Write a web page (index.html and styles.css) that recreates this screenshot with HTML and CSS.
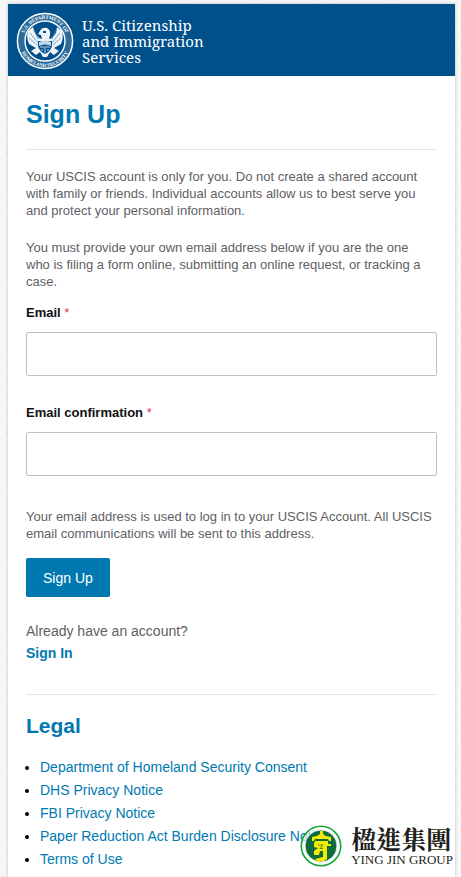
FILE: index.html
```
<!DOCTYPE html>
<html lang="en">

<head>
  <meta charset="UTF-8" />
  <meta name="viewport" content="width=device-width, initial-scale=1.0" />
  <title>Sign Up | USCIS</title>
  <link rel="stylesheet" href="styles.css">
</head>

<body>

  <div class="page">
    <header class="header">
      <svg class="seal" viewBox="0 0 58 58" aria-hidden="true">
        <defs>
          <path id="sealTop" d="M7.6 34 A22 22 0 1 1 50.4 34" />
          <path id="sealBottom" d="M3.5 34 A26 26 0 0 0 54.5 34" />
        </defs>
        <circle cx="29" cy="29" r="27.6" fill="#2b6b9c" stroke="#fff" stroke-width="1.5" />
        <circle cx="29" cy="29" r="20" fill="#00518b" stroke="#fff" stroke-width="1.4" />
        <text class="seal-text"><textPath href="#sealTop" startOffset="50%">U.S. DEPARTMENT OF</textPath></text>
        <text class="seal-text"><textPath href="#sealBottom" startOffset="50%">HOMELAND SECURITY</textPath></text>
        <!-- eagle -->
        <path fill="#eef4f8" d="M12 19 L17 15 L19 21 L23 26 L26 27 L25 23 L22 22 L24 19 Q26 15 31 16 Q35 18 34 23 L33 27 L36 26 L40 21 L41 15 L46 19 Q48 26 45 32 L38 36 L43 39 L38 43 L34 40 L31 45 H27 L24 40 L20 43 L15 39 L20 36 L13 32 Q10 26 12 19Z" />
        <path fill="none" stroke="#4f86ae" stroke-width="0.7" d="M14 21 L23 32 M13 26 L21 33 M44 21 L35 32 M45 26 L37 33 M18 18 L22 27 M40 18 L36 27" />
        <path fill="#00518b" d="M22 29 H36 V34 Q35 39 29 42 Q23 39 22 34Z" />
        <path fill="#c3d7e5" d="M23 30 Q29 27 35 30 V34 Q29 31 23 34Z" />
        <path fill="none" stroke="#d5e4ee" stroke-width="0.9" d="M24 35 H34 M26 37 V39 M29 36 V41 M32 37 V39" />
        <path fill="#00518b" d="M27 19 H30 V21 H27Z" />
      </svg>
      <div class="brand">U.S. Citizenship<br>and Immigration<br>Services</div>
    </header>

    <main class="content">
      <h1>Sign Up</h1>
      <hr>
      <div class="intro">
        <p>Your USCIS account is only for you. Do not create a shared account with family or friends. Individual accounts allow us to best serve you and protect your personal information.</p>
        <p>You must provide your own email address below if you are the one who is filing a form online, submitting an online request, or tracking a case.</p>
      </div>

      <form id="signUpForm">
        <div class="field">
          <label for="email">Email <span class="required">*</span></label>
          <input type="email" id="email" name="email" required>
        </div>
        <div class="field">
          <label for="emailConfirmation">Email confirmation <span class="required">*</span></label>
          <input type="email" id="emailConfirmation" name="emailConfirmation" required>
        </div>
        <p class="hint">Your email address is used to log in to your USCIS Account. All USCIS email communications will be sent to this address.</p>
        <button type="submit" class="btn">Sign Up</button>
      </form>

      <div class="account">
        <p>Already have an account?</p>
        <a href="#">Sign In</a>
      </div>
      <hr>

      <h2>Legal</h2>
      <ul class="legal">
        <li><a href="#">Department of Homeland Security Consent</a></li>
        <li><a href="#">DHS Privacy Notice</a></li>
        <li><a href="#">FBI Privacy Notice</a></li>
        <li><a href="#">Paper Reduction Act Burden Disclosure Notice</a></li>
        <li><a href="#">Terms of Use</a></li>
      </ul>
    </main>
  </div>

  <!-- Watermark -->
  <div class="watermark">
    <svg class="watermark-logo" viewBox="0 0 42 42" aria-hidden="true">
      <circle cx="21" cy="21" r="19.7" fill="#fff" fill-opacity="0.6" stroke="#13a538" stroke-width="1.6" />
      <circle cx="21" cy="21" r="16" fill="#0d6b3c" stroke="#fff" stroke-width="0.8" />
      <path fill="#f6ea00" d="M20 6 H23 V9 L26 11 L31 12 V16 H29 L28 14 H15 L14 16 H12 V12 L17 11 L20 9Z" />
      <path fill="#f6ea00" d="M15 16 H28 V19 H31 V21 H27 V34 L24 36 L17 37 L15 34 L23 32 V26 L20 26 L19 30 L14 30 V26 L18 23 L14 22 V19Z" />
      <path fill="none" stroke="#0d6b3c" stroke-width="0.7" d="M15 15 H28 M18 20 H23 L20 23.5 H23" />
    </svg>
    <div class="watermark-name">
      <span class="name-zh" lang="zh-Hant">楹進集團</span>
      <span class="name-en">YING JIN GROUP</span>
    </div>
  </div>

</body>

</html>
```
FILE: styles.css
```
* {
  margin: 0;
  padding: 0;
  box-sizing: border-box;
}

body {
  min-height: 100vh;
  padding: 4px 6px 0 8px;
  display: flex;
  flex-direction: column;
  font-family: Arial, "Liberation Sans", sans-serif;
  font-size: 13px;
  line-height: 17px;
  color: #5f6064;
  background: repeating-linear-gradient(135deg, #f9f9f9 0, #f9f9f9 2px, #f1f1f1 2px, #f1f1f1 3px);
}

.page {
  flex: 1;
  background-color: #fff;
  box-shadow: 0 0 3px rgba(0, 0, 0, 0.25);
}

.header {
  display: flex;
  align-items: center;
  gap: 8px;
  height: 72px;
  padding: 2px 8px 0;
  background-color: #00518b;
}

.seal {
  width: 58px;
  height: 58px;
}

.seal-text {
  font-family: "Liberation Serif", serif;
  font-size: 5px;
  font-weight: bold;
  text-anchor: middle;
  fill: #fff;
}

.brand {
  font-family: "Noto Serif", "DejaVu Serif", "Liberation Serif", serif;
  font-size: 15px;
  line-height: 16px;
  color: #fff;
}

.content {
  padding: 24px 18px 0;
}

h1 {
  font-size: 25px;
  line-height: 28px;
  color: #0079b0;
}

hr {
  margin: 21px 0 18px;
  border: none;
  border-top: 1px solid #e4e4e4;
}

.intro {
  padding-right: 8px;
  margin-bottom: 14px;
}

.intro p + p {
  margin-top: 20px;
}

.field {
  margin-bottom: 28px;
}

.field label {
  display: block;
  margin-bottom: 11px;
  font-weight: bold;
  color: #111;
}

.required {
  font-weight: normal;
  color: #e03a4e;
}

.field input {
  display: block;
  width: 100%;
  height: 44px;
  padding: 0 12px;
  font-size: 14px;
  border: 1px solid #c0c0c0;
  border-radius: 2px;
}

.hint {
  padding-top: 4px;
  margin-bottom: 16px;
}

.btn {
  height: 39px;
  padding: 0 17px;
  font-family: inherit;
  font-size: 14px;
  color: #fff;
  background-color: #0079b0;
  border: none;
  border-radius: 2px;
  cursor: pointer;
}

a {
  color: #0079b0;
  text-decoration: none;
}

.account {
  margin: 23px 0 30px;
  font-size: 14px;
  line-height: 22px;
}

.account a {
  font-weight: bold;
}

h2 {
  font-size: 21px;
  line-height: 26px;
  color: #0079b0;
}

.legal {
  margin-top: 17px;
  padding-left: 14px;
  font-size: 14px;
  line-height: 23px;
  color: #000;
}

.watermark {
  position: absolute;
  top: 825px;
  right: 8px;
  display: flex;
  align-items: center;
  gap: 9px;
}

.watermark-logo {
  width: 42px;
  height: 42px;
}

.watermark-name {
  display: flex;
  flex-direction: column;
  color: #231f20;
}

.name-zh {
  font-family: "Noto Serif CJK TC", "Noto Sans CJK TC", serif;
  font-size: 25px;
  font-weight: bold;
  line-height: 27px;
}

.name-en {
  font-family: "Liberation Serif", serif;
  font-size: 13px;
  line-height: 15px;
}
```
